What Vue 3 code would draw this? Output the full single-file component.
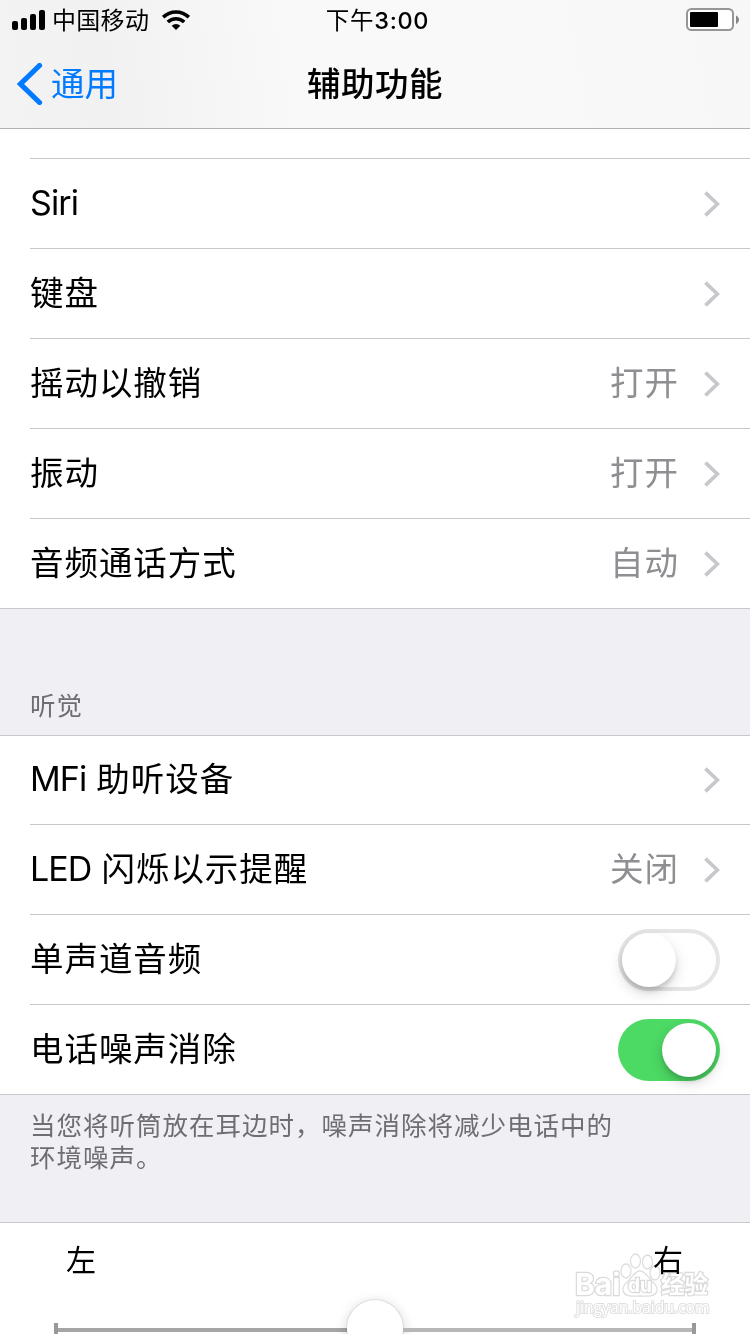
<template>
  <div class="screen">
    <header class="header">
      <div class="status-bar">
        <div class="carrier">
          <svg class="signal" width="34" height="20" viewBox="0 0 34 20">
            <rect x="0" y="11" width="6" height="9" rx="2" />
            <rect x="9" y="8" width="6" height="12" rx="2" />
            <rect x="18" y="4" width="6" height="16" rx="2" />
            <rect x="27" y="0" width="6" height="20" rx="2" />
          </svg>
          <span class="carrier-name">中国移动</span>
          <svg class="wifi" width="28" height="20" viewBox="0 0 28 20">
            <g fill="none" stroke="#000" stroke-width="3.6">
              <path d="M1.2 7.2a18.2 18.2 0 0 1 25.6 0" />
              <path d="M5.8 12.1a11.6 11.6 0 0 1 16.4 0" />
            </g>
            <path d="M9.7 15.8a6.1 6.1 0 0 1 8.6 0L14 20z" />
          </svg>
        </div>
        <div class="time"><span class="time-period">下午</span>3:00</div>
        <svg class="battery" width="54" height="24" viewBox="0 0 54 24">
          <rect x="1" y="1" width="46" height="21" rx="4.5" fill="#fff" stroke="#969696" stroke-width="2" />
          <rect x="4" y="4" width="28" height="15" rx="1" />
          <path d="M50 7.5c4 2 4 6.500 0 8.500z" fill="#858585" />
        </svg>
      </div>

      <nav class="nav-bar">
        <a class="back">
          <svg width="26" height="42" viewBox="0 0 26 42">
            <path d="M22.500 2.500L3.500 21L22.500 39.500" fill="none" stroke="#007aff" stroke-width="5.200" stroke-linecap="round" />
          </svg>
          <span>通用</span>
        </a>
        <h1>辅助功能</h1>
      </nav>
    </header>

    <section class="group">
      <div class="row row-cut"></div>
      <div v-for="item in generalItems" :key="item.label" class="row">
        <span class="label"><span v-if="item.prefix" class="prefix">{{ item.prefix }}</span>{{ item.label }}</span>
        <span class="value">{{ item.value }}</span>
        <svg class="chevron" width="17" height="26" viewBox="0 0 17 26">
          <path d="M2.400 1.600L14.400 13L2.400 24.400" />
        </svg>
      </div>
    </section>

    <h2 class="group-title">听觉</h2>

    <section class="group hearing">
      <div v-for="item in hearingItems" :key="item.label" class="row">
        <span class="label"><span v-if="item.prefix" class="prefix">{{ item.prefix }}</span>{{ item.label }}</span>
        <button
          v-if="item.toggle"
          class="switch"
          :class="{ on: item.on }"
          @click="item.on = !item.on"
        ><span class="knob"></span></button>
        <template v-else>
          <span class="value">{{ item.value }}</span>
          <svg class="chevron" width="17" height="26" viewBox="0 0 17 26">
            <path d="M2.400 1.600L14.400 13L2.400 24.400" />
          </svg>
        </template>
      </div>
    </section>

    <p class="group-note">当您将听筒放在耳边时，噪声消除将减少电话中的<br />环境噪声。</p>

    <section class="balance">
      <div class="balance-labels">
        <span>左</span>
        <span>右</span>
      </div>
      <div class="slider">
        <span class="track"></span>
        <span class="slider-knob"></span>
        <span class="track track-right"></span>
      </div>

      <div class="watermark">
        <svg class="paw" width="136" height="48" viewBox="0 0 136 48">
          <g fill="#fff" stroke="#dedede" stroke-width="1.300">
            <ellipse cx="52" cy="18" rx="5" ry="7" />
            <ellipse cx="61.500" cy="8" rx="5" ry="7" />
            <ellipse cx="73.500" cy="9" rx="5" ry="7" />
            <ellipse cx="81" cy="20" rx="5" ry="7" />
            <path d="M66 18c5 0 7 5 11 9s7 7 6 11c-2 6-9 5-17 5s-15 1-17-5c-1-4 2-7 6-11s6-9 11-9z" />
          </g>
        </svg>
        <span class="mark mark-bai">Bai</span>
        <span class="mark mark-du">du</span>
        <span class="mark mark-cn">经验</span>
        <span class="mark mark-url">jingyan.baidu.com</span>
      </div>
    </section>
  </div>
</template>

<script setup>
import { ref } from 'vue'

const generalItems = ref([
  { prefix: 'Siri', label: '', value: '' },
  { label: '键盘', value: '' },
  { label: '摇动以撤销', value: '打开' },
  { label: '振动', value: '打开' },
  { label: '音频通话方式', value: '自动' }
])

const hearingItems = ref([
  { prefix: 'MFi', label: '助听设备', value: '' },
  { prefix: 'LED', label: '闪烁以示提醒', value: '关闭' },
  { label: '单声道音频', toggle: true, on: false },
  { label: '电话噪声消除', toggle: true, on: true }
])
</script>

<style>
body {
  margin: 0;
  background: #efeff4;
}
</style>

<style scoped>
.screen {
  width: 750px;
  height: 1334px;
  overflow: hidden;
  background: #efeff4;
  color: #000;
  font-family: Inter, 'Noto Sans CJK SC', sans-serif;
}

.header {
  box-sizing: border-box;
  height: 129px;
  border-bottom: 1px solid #b2b2b2;
  background: linear-gradient(80deg, #f3f3f3 0, #f1f1f1 110px, #f9f9f9 300px, #f9f9f9 520px, #f7f7f7 100%);
}

.status-bar {
  display: grid;
  grid-template-columns: 1fr auto 1fr;
  align-items: center;
  height: 40px;
  padding: 0 10px 0 12px;
}

.carrier {
  display: flex;
  align-items: center;
}

.carrier-name {
  margin-left: 6px;
  padding-top: 2px;
  font-size: 24px;
  line-height: 38px;
  letter-spacing: 0.3px;
}

.wifi {
  margin-left: 13px;
}

.time {
  padding: 2px 0 0 3px;
  font-size: 23.5px;
  font-weight: 500;
  line-height: 38px;
  letter-spacing: 0.7px;
}

.time-period {
  font-weight: 400;
}

.battery {
  justify-self: end;
}

.nav-bar {
  display: grid;
  grid-template-columns: 1fr auto 1fr;
  align-items: center;
  height: 88px;
  padding: 0 17px;
}

.back {
  display: flex;
  align-items: center;
  color: #007aff;
  font-size: 33.5px;
  line-height: 48px;
}

.back span {
  margin-left: 8px;
}

h1 {
  margin: 0;
  font-size: 33.5px;
  font-weight: 500;
  line-height: 48px;
  letter-spacing: 0.5px;
}

.group {
  background: #fff;
  border-bottom: 1px solid #c8c7cc;
}

.row {
  display: flex;
  align-items: center;
  box-sizing: border-box;
  height: 90px;
  margin-left: 30px;
  padding-right: 30px;
  border-bottom: 1px solid #c8c7cc;
}

.row:last-child {
  height: 89px;
  border-bottom: none;
}

.row-cut {
  height: 30px;
}

.label {
  flex: 1;
  padding-bottom: 2px;
  font-size: 33.5px;
  line-height: 48px;
  letter-spacing: 0.95px;
}

.prefix {
  margin-right: 10px;
  font-size: 34px;
  letter-spacing: -0.9px;
}

.value {
  padding-bottom: 2px;
  color: #8e8e93;
  font-size: 33.5px;
  line-height: 48px;
  letter-spacing: 0.95px;
}

.chevron {
  margin-left: 24px;
  fill: none;
  stroke: #c7c7cc;
  stroke-width: 3.7;
}

.switch {
  width: 102px;
  height: 62px;
  padding: 4px;
  border: none;
  border-radius: 31px;
  background: #fff;
  box-shadow: inset 0 0 0 4px #e5e5e5;
}

.knob {
  display: block;
  width: 54px;
  height: 54px;
  border-radius: 50%;
  background: #fff;
  box-shadow: 0 6px 14px rgba(0, 0, 0, 0.16), 0 4px 4px rgba(0, 0, 0, 0.12);
}

.switch.on {
  background: #4cd964;
  box-shadow: none;
}

.switch.on .knob {
  margin-left: 40px;
}

.group-title {
  box-sizing: border-box;
  height: 126px;
  margin: 0;
  padding: 79px 30px 0;
  color: #6d6d72;
  font-size: 25.5px;
  font-weight: 400;
  line-height: 36px;
  letter-spacing: 0.9px;
}

.hearing {
  border-top: 1px solid #c8c7cc;
}

.hearing .row:first-child {
  height: 89px;
}

.group-note {
  box-sizing: border-box;
  height: 127px;
  margin: 0;
  padding: 15px 30px 0;
  color: #6d6d72;
  font-size: 25.5px;
  line-height: 32px;
  letter-spacing: 1px;
}

.balance {
  position: relative;
  height: 112px;
  border-top: 1px solid #c8c7cc;
  background: #fff;
}

.balance-labels {
  display: flex;
  justify-content: space-between;
  padding: 15px 67px 0 66px;
  font-size: 30px;
  line-height: 44px;
}

.slider {
  display: flex;
  align-items: center;
  height: 58px;
  margin: 17px 54px 0;
}

.track {
  box-sizing: border-box;
  flex: 1;
  height: 14px;
  margin-top: 4px;
  border-left: 4px solid #999;
  background: linear-gradient(#a5a5a5, #a5a5a5) center / 100% 4px no-repeat;
}

.track-right {
  border-left: none;
  border-right: 4px solid #999;
  background-image: linear-gradient(#b7b7b7, #b7b7b7);
}

.slider-knob {
  width: 56px;
  height: 56px;
  border-radius: 50%;
  background: #fff;
  box-shadow: 0 0 0 1px rgba(0, 0, 0, 0.08), 0 3px 13px rgba(0, 0, 0, 0.2);
}

/* stamp laid over the slider labels */
.watermark {
  position: absolute;
  top: 30px;
  left: 574px;
  width: 140px;
  height: 70px;
  mix-blend-mode: multiply;
}

.paw {
  position: absolute;
  top: 0;
  left: 0;
}

.mark {
  position: absolute;
  color: #fff;
  font-weight: 700;
  white-space: nowrap;
  paint-order: stroke fill;
  -webkit-text-stroke: 2.4px #dadada;
}

.mark-bai {
  top: 18px;
  left: 1px;
  font-size: 30px;
  line-height: 26px;
}

.mark-du {
  top: 21px;
  left: 54px;
  font-size: 19px;
  line-height: 24px;
}

.mark-cn {
  top: 18px;
  left: 87px;
  font-size: 23.5px;
  line-height: 28px;
}

.mark-url {
  top: 46px;
  left: 2px;
  font-family: 'Open Sans', sans-serif;
  font-size: 15.7px;
  font-weight: 400;
  line-height: 16px;
  -webkit-text-stroke: 2px #e0e0e0;
}
</style>
